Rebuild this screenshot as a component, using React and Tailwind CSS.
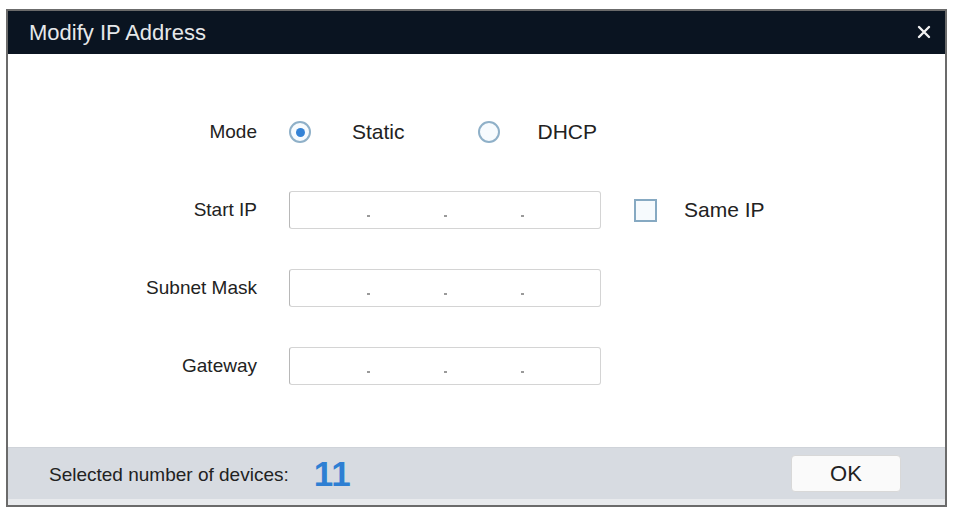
import React from "react";

const font = { fontFamily: '"Liberation Sans", Arial, sans-serif' };

function IpInput() {
  return (
    <div className="w-[312px] h-[38px] rounded-[3px] border border-[#d4d4d4] border-l-[#b8b8b8] bg-white flex items-end justify-center gap-[74px] pb-[11px]">
      <span className="w-[3px] h-[2px] bg-[#9a9a9a]" />
      <span className="w-[3px] h-[2px] bg-[#9a9a9a]" />
      <span className="w-[3px] h-[2px] bg-[#9a9a9a]" />
    </div>
  );
}

function Row({ label, children }) {
  return (
    <div className="flex items-center h-[38px]">
      <div className="w-[249px] text-right text-[19px] text-[#222]">{label}</div>
      <div className="ml-[32px] flex items-center">{children}</div>
    </div>
  );
}

function Radio({ checked }) {
  return (
    <span className="w-[22px] h-[22px] rounded-full border-2 border-[#8fb0c8] bg-[#f7fbfe] flex items-center justify-center">
      {checked && <span className="w-[9px] h-[9px] rounded-full bg-[#3583d6]" />}
    </span>
  );
}

export default function App() {
  return (
    <div className="w-[960px] h-[516px] bg-white pt-[9px] pl-[6px]" style={font}>
      <div className="w-[941px] h-[498px] border-2 border-[#6b6b6b] flex flex-col bg-white">
        <div className="h-[43px] bg-[#0a1421] flex items-center justify-between pl-[21px] pr-[14px]">
          <span className="text-[22px] text-[#e6e8ea]">Modify IP Address</span>
          <svg width="14" height="14" viewBox="0 0 14 14" className="mt-[-2px]">
            <path d="M2 2 L12 12 M12 2 L2 12" stroke="#f2f2f2" strokeWidth="2.4" strokeLinecap="round" />
          </svg>
        </div>
        <div className="flex-1 flex flex-col gap-[40px] pt-[59px]">
          <Row label="Mode">
            <Radio checked />
            <span className="ml-[41px] text-[21px] text-[#222]">Static</span>
            <span className="ml-[73px]">
              <Radio />
            </span>
            <span className="ml-[38px] text-[21px] text-[#222]">DHCP</span>
          </Row>
          <Row label="Start IP">
            <IpInput />
            <span className="ml-[33px] w-[23px] h-[23px] border-2 border-[#86a9c2] bg-[#f6fafd]" />
            <span className="ml-[27px] text-[21px] text-[#222]">Same IP</span>
          </Row>
          <Row label="Subnet Mask">
            <IpInput />
          </Row>
          <Row label="Gateway">
            <IpInput />
          </Row>
        </div>
        <div className="h-[52px] bg-[#d7dbe1] border-t border-[#cfd3d9] flex items-center pl-[41px] pr-[44px]">
          <span className="text-[19px] text-[#222] mt-[3px]">Selected number of devices:</span>
          <span className="ml-[25px] text-[35px] font-bold text-[#2e7fd3] leading-none">11</span>
          <button className="ml-auto w-[110px] h-[37px] rounded-[4px] bg-[#fafafa] border border-[#d8d8d8] text-[22px] text-[#222]">
            OK
          </button>
        </div>
        <div className="h-[6px] bg-[#e8eaed]" />
      </div>
    </div>
  );
}
